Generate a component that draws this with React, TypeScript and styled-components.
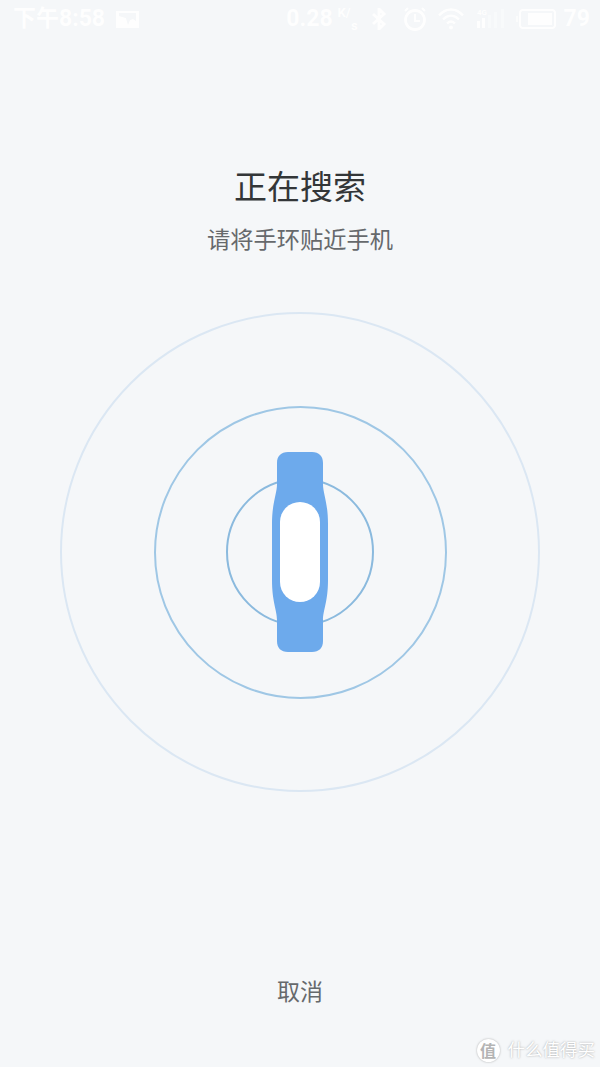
import React from "react";
import styled, { createGlobalStyle } from "styled-components";

const GlobalStyle = createGlobalStyle`
  html, body {
    margin: 0;
    padding: 0;
    background: #f5f7f9;
  }
`;

const Page = styled.div`
  position: relative;
  width: 600px;
  height: 1067px;
  overflow: hidden;
  display: flex;
  flex-direction: column;
  align-items: center;
  background: #f5f7f9;
  font-family: "Roboto", "Noto Sans CJK SC", sans-serif;
`;

const StatusBar = styled.div`
  width: 100%;
  height: 38px;
  box-sizing: border-box;
  padding: 0 10px 0 13px;
  display: flex;
  align-items: center;
  color: #fff;
  opacity: 0.92;
  flex-shrink: 0;
`;

const StatusText = styled.span<{ $gap?: number }>`
  font-size: 23px;
  line-height: 38px;
  font-weight: 700;
  margin-left: ${(p) => p.$gap ?? 0}px;
  white-space: nowrap;
`;

const StatusIcon = styled.svg<{ $gap: number }>`
  display: block;
  margin-left: ${(p) => p.$gap}px;
  flex-shrink: 0;
`;

const Spacer = styled.div`
  flex: 1;
`;

const Speed = styled.span`
  display: flex;
  flex-direction: column;
  width: 20px;
  margin-left: 5px;
  font-size: 13px;
  line-height: 13px;
  font-weight: 700;
`;

const SpeedUnit = styled.span<{ $right?: boolean }>`
  align-self: ${(p) => (p.$right ? "flex-end" : "flex-start")};
`;

const Title = styled.h1`
  margin: 128px 0 0;
  font-size: 33px;
  line-height: 44px;
  font-weight: 400;
  color: #333638;
`;

const Subtitle = styled.p`
  margin: 15px 0 0;
  font-size: 23.25px;
  line-height: 30px;
  font-weight: 400;
  color: #66696c;
`;

const Radar = styled.div`
  margin-top: 57px;
  width: 480px;
  height: 480px;
  display: grid;
  place-items: center;
`;

const Ring = styled.div<{ $size: number; $color: string }>`
  grid-area: 1 / 1;
  width: ${(p) => p.$size}px;
  height: ${(p) => p.$size}px;
  box-sizing: border-box;
  border-radius: 50%;
  border: 2px solid ${(p) => p.$color};
`;

const Band = styled.svg`
  grid-area: 1 / 1;
  display: block;
`;

const CancelButton = styled.button`
  margin-top: 186px;
  padding: 0;
  border: 0;
  background: none;
  font-family: inherit;
  font-size: 23px;
  line-height: 30px;
  color: #66696c;
`;

const Watermark = styled.div`
  position: absolute;
  right: 5px;
  bottom: 5px;
  display: flex;
  align-items: center;
  gap: 8px;
  color: #fff;
  text-shadow: 0 0 2px rgba(90, 90, 90, 0.55);
`;

const WatermarkBadge = styled.span`
  width: 23px;
  height: 23px;
  border-radius: 50%;
  display: flex;
  align-items: center;
  justify-content: center;
  font-size: 16px;
  font-weight: 700;
  color: #b4b4b4;
  text-shadow: none;
  background: #fff;
  box-shadow: 0 0 2px rgba(90, 90, 90, 0.5);
`;

const WatermarkText = styled.span`
  font-size: 17.5px;
  line-height: 24px;
`;

export default function App() {
  return (
    <Page>
      <GlobalStyle />
      <StatusBar>
        <StatusText>下午8:58</StatusText>
        <StatusIcon $gap={11} width="23" height="19" viewBox="0 0 23 19">
          <path
            fill="#fff"
            fillRule="evenodd"
            d="M0 1h23v17H0zM3 3v3l7 2 2 7 2-5 3-1 3 2V3z"
          />
        </StatusIcon>
        <Spacer />
        <StatusText>0.28</StatusText>
        <Speed>
          <SpeedUnit>K/</SpeedUnit>
          <SpeedUnit $right>s</SpeedUnit>
        </Speed>
        <StatusIcon $gap={13} width="16" height="22" viewBox="0 0 16 22">
          <path fill="none" stroke="#fff" strokeWidth="3" d="M2 6l11 10-5 5V1l5 5L2 16" />
        </StatusIcon>
        <StatusIcon $gap={16} width="24" height="24" viewBox="0 0 24 24">
          <circle cx="12" cy="13" r="9.500" fill="none" stroke="#fff" strokeWidth="2.800" />
          <path fill="none" stroke="#fff" strokeWidth="2.200" d="M12 7v7h5M2 4l3-3M22 4l-3-3" />
        </StatusIcon>
        <StatusIcon $gap={11} width="26" height="22" viewBox="0 0 26 22">
          <path
            fill="none"
            stroke="#fff"
            strokeWidth="2.400"
            d="M1 7.500C8-.5 18-.5 25 7.500M5 11.500C10 6.500 16 6.500 21 11.500M9 15.500c2.500-2.500 5.500-2.500 8 0"
          />
          <circle cx="13" cy="19.500" r="2" fill="#fff" />
        </StatusIcon>
        <StatusIcon $gap={11} width="30" height="22" viewBox="0 0 30 22">
          <text x="2" y="7" fontSize="8" fontWeight="700" fill="#fff" fontFamily="Roboto, sans-serif">
            4G
          </text>
          <rect x="2" y="13" width="3" height="7" fill="#fff" />
          <rect x="7" y="10" width="3" height="10" fill="#fff" />
          <rect x="13" y="7" width="3" height="13" fill="#fff" opacity="0.45" />
          <rect x="19" y="4" width="3" height="16" fill="#fff" opacity="0.45" />
          <rect x="26" y="1" width="3" height="19" fill="#fff" opacity="0.45" />
        </StatusIcon>
        <StatusIcon $gap={11} width="40" height="20" viewBox="0 0 40 20">
          <rect x="4" y="1" width="35" height="18" rx="3" fill="none" stroke="#fff" strokeWidth="2" />
          <rect x="0" y="7" width="2" height="6" fill="#fff" opacity="0.7" />
          <rect x="12" y="4" width="24" height="12" fill="#fff" />
        </StatusIcon>
        <StatusText $gap={8}>79</StatusText>
      </StatusBar>

      <Title>正在搜索</Title>
      <Subtitle>请将手环贴近手机</Subtitle>

      <Radar>
        <Ring $size={480} $color="#dbe7f3" />
        <Ring $size={293} $color="#9fc7e5" />
        <Ring $size={148} $color="#8bbade" />
        <Band width="56" height="200" viewBox="0 0 56 200">
          <path
            fill="#6daaec"
            d="M16 0H40C47 0 51 4 51 11V32C51 42 56 50 56 72V128C56 150 51 158 51 168V189C51 196 47 200 40 200H16C9 200 5 196 5 189V168C5 158 0 150 0 128V72C0 50 5 42 5 32V11C5 4 9 0 16 0Z"
          />
          <rect x="8" y="50" width="40" height="100" rx="20" fill="#fff" />
        </Band>
      </Radar>

      <CancelButton>取消</CancelButton>

      <Watermark>
        <WatermarkBadge>值</WatermarkBadge>
        <WatermarkText>什么值得买</WatermarkText>
      </Watermark>
    </Page>
  );
}
